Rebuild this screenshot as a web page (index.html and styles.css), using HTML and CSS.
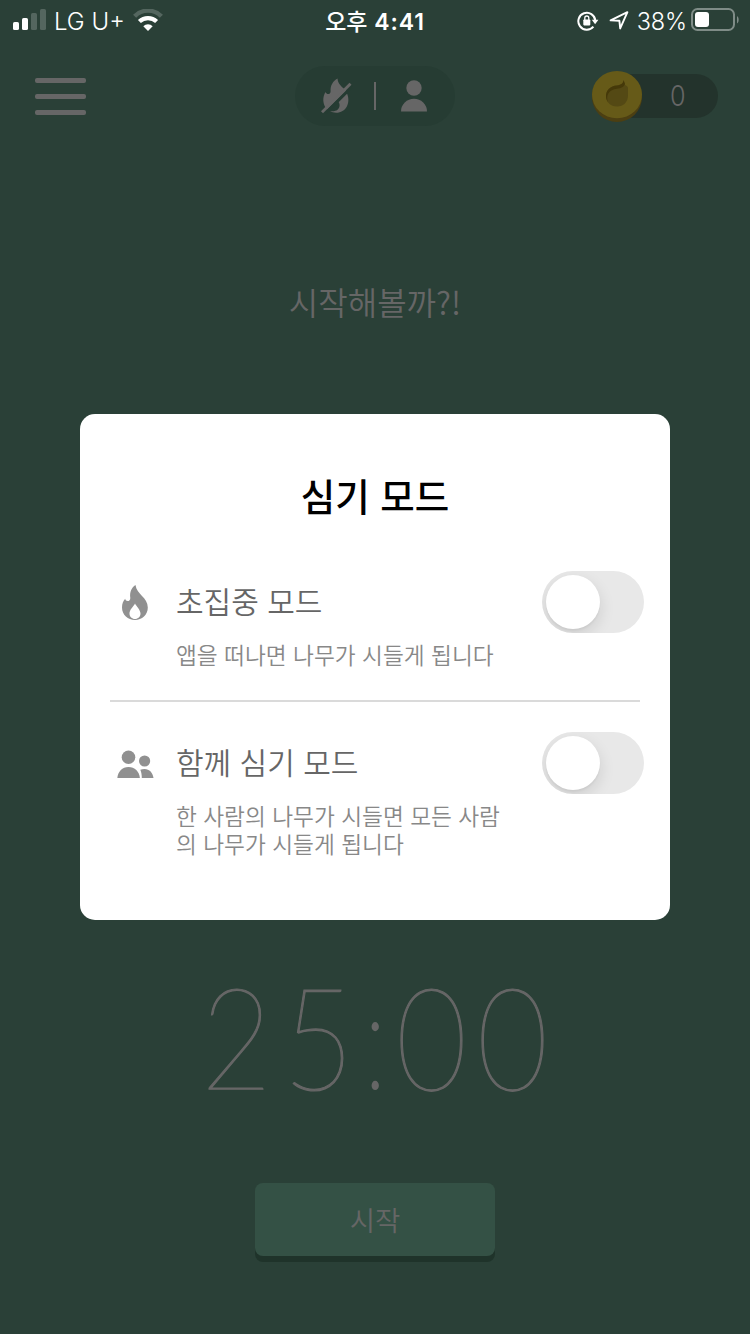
FILE: index.html
```html
<!DOCTYPE html>
<html lang="ko">
<head>
    <meta charset="UTF-8"/>
    <title>심기 모드</title>
    <meta name="viewport" content="width=device-width, initial-scale=1"/>
    <link rel="stylesheet" href="styles.css">
</head>
<body>
    <div class="screen">
        <header class="status">
            <div class="status-left">
                <svg class="signal" width="34" height="22" viewBox="0 0 34 22" fill="#fff">
                    <rect x="0" y="13" width="6" height="8" rx="1.6"/>
                    <rect x="9" y="9" width="6" height="12" rx="1.6"/>
                    <rect x="18" y="4" width="6" height="17" rx="1.6" opacity=".2"/>
                    <rect x="27" y="0" width="6" height="21" rx="1.6" opacity=".2"/>
                </svg>
                <span class="carrier">LG U+</span>
                <svg class="wifi" width="30" height="22" viewBox="0 0 30 22" fill="none" stroke="#fff">
                    <path d="M1.600 7.200a19 19 0 0 1 26.800 0" stroke-width="4.400" opacity=".2"/>
                    <path d="M6.400 12.600a12.400 12.400 0 0 1 17.200 0" stroke-width="4.200"/>
                    <path d="M15 22l-4.700-4.800a6.700 6.700 0 0 1 9.400 0z" fill="#fff" stroke="none"/>
                </svg>
            </div>
            <div class="clock"><span>오후</span> 4:41</div>
            <div class="status-right">
                <svg class="lock" width="22" height="20" viewBox="0 0 22 20">
                    <path d="M16.400 15.600A8.500 8.500 0 1 1 18.300 9.500" fill="none" stroke="#fff" stroke-width="2"/>
                    <path d="M14.800 8.800h6.600l-3.300 4.400z" fill="#fff"/>
                    <rect x="6.300" y="8.400" width="7" height="6" rx=".8" fill="#fff"/>
                    <path d="M7.800 9V7a2 2 0 0 1 4 0v2" fill="none" stroke="#fff" stroke-width="1.300"/>
                </svg>
                <svg class="arrow" width="20" height="19" viewBox="0 0 20 19">
                    <path d="M1.600 9.400L18.400 1.200l-7.200 16.200-.8-7.600z" fill="none" stroke="#fff" stroke-width="1.900" stroke-linejoin="round"/>
                </svg>
                <span class="percent">38%</span>
                <svg class="battery" width="48" height="24" viewBox="0 0 48 24">
                    <rect x="1" y="1" width="42" height="21" rx="5.500" fill="none" stroke="#fff" stroke-width="2" opacity=".4"/>
                    <rect x="4" y="4" width="14" height="15" rx="3" fill="#fff"/>
                    <path d="M46 8c2.200 1.300 2.200 6.200 0 7.500z" fill="#fff" opacity=".4"/>
                </svg>
            </div>
        </header>
        <nav class="topbar">
            <div class="menu"><i></i><i></i><i></i></div>
            <div class="modes">
                <svg width="32" height="36" viewBox="0 0 32 36">
                    <path d="M16.500 .5C17 6 20.500 8.500 25 12.500L6 31.200C1.500 27 1.200 18.500 4.700 14c.8 3.300 5.300 2.500 4.900-1C9.200 7.500 12 3 16.500 .5z" fill="#666"/>
                    <path d="M26 15.500c4 9.500-1.100 19.300-10.800 19.300-2.500 0-4.500-.6-6.200-1.700 5.500 1 9.500-1.300 9.600-5.800 0-1.600-.6-3.100-1.600-3.800z" fill="#666"/>
                    <path d="M4.500 36.300l28.500-28.500" stroke="#263c33" stroke-width="1.500"/>
                    <path d="M1 34.300l28.500-28.500" stroke="#666" stroke-width="2.800"/>
                </svg>
                <span class="modes-line"></span>
                <svg width="26" height="32" viewBox="0 0 26 32" fill="#666">
                    <circle cx="13" cy="8" r="7.700"/>
                    <path d="M0 31.500a13 12.700 0 0 1 26 0z"/>
                </svg>
            </div>
            <div class="coins">
                <svg width="50" height="51" viewBox="0 0 50 51">
                    <circle cx="25" cy="26" r="25" fill="#4c3f12"/>
                    <ellipse cx="25" cy="23.600" rx="25" ry="23.600" fill="#665a18"/>
                    <path d="M31.500 9c0 3-2 5-6.500 5.500-6.500.2-11 4.700-11 10.500s4.500 10.500 11 10.500 11-4.500 11-11V17c0-1.500-1.500-2.500-3-3z" fill="#544914"/>
                    <path d="M31.500 9c0 3-2 5-6.500 5.500-6.500.2-11 4.700-11 10.500 0 2.500.8 4.800 2.200 6.500-3-7 1-13.300 8.800-13.800 4.300-.3 7-1.700 8-4.700z" fill="#453909"/>
                </svg>
                <span class="coins-count">0</span>
            </div>
        </nav>
        <main class="timer">
            <p class="greeting">시작해볼까?!</p>
            <div class="time"><span>2</span><span>5</span><span class="colon">:</span><span>0</span><span>0</span></div>
            <button class="start">시작</button>
        </main>
    </div>
    <section class="dialog">
        <h1>심기 모드</h1>
        <div class="option">
            <svg class="option-icon" width="38" height="36" viewBox="0 0 38 36">
                <path d="M19.500 0C20.500 9 31.800 12.500 31.800 22.500 31.800 30 26 35 19 35S6 30 6 22.500c0-3.600 1.200-6.700 3.200-8.700.2 3.100 5.400 3.200 5.100-.8C13.500 7 15.500 2.500 19.500 0zM19 18.500c-1.500 3-5.500 6-5.500 10 0 3.200 2.500 5.500 5.500 5.500s5.500-2.300 5.500-5.500c0-3.500-4-7-5.500-10z" fill="#909090" fill-rule="evenodd"/>
            </svg>
            <div class="option-text">
                <h2>초집중 모드</h2>
                <p>앱을 떠나면 나무가 시들게 됩니다</p>
            </div>
            <span class="switch"></span>
        </div>
        <div class="option">
            <svg class="option-icon" width="38" height="36" viewBox="0 0 38 36" fill="#909090">
                <circle cx="12.500" cy="11.200" r="6.800"/>
                <circle cx="28.600" cy="15" r="5.600"/>
                <path d="M1.300 32c.6-6.500 5-11 11.200-11s10.800 4.500 11.400 11z"/>
                <path d="M24.300 23.800c1.300-.6 2.700-.9 4.200-.9 5 0 8.400 3.800 9 9.100H25.800c0-3.200-.5-6-1.500-8.200z"/>
            </svg>
            <div class="option-text">
                <h2>함께 심기 모드</h2>
                <p>한 사람의 나무가 시들면 모든 사람<br>의 나무가 시들게 됩니다</p>
            </div>
            <span class="switch"></span>
        </div>
    </section>
</body>
</html>
```
FILE: styles.css
```css
body {
    margin: 0;
    background-color: #2a4037;
    color: #666;
    font-family: Inter, 'Noto Sans CJK KR', sans-serif;
}

h1, h2, p {
    margin: 0;
}

svg {
    display: block;
    flex: none;
}

.screen {
    display: flex;
    flex-direction: column;
    width: 750px;
    height: 1334px;
    overflow: hidden;
}

/* status bar */
.status {
    display: grid;
    grid-template-columns: 1fr auto 1fr;
    align-items: center;
    height: 40px;
    color: #fff;
    font-size: 24px;
    white-space: nowrap;
}

.status-left, .status-right {
    display: flex;
    align-items: center;
}

.status-left {
    padding-left: 13px;
}

.status-right {
    justify-content: flex-end;
    padding-right: 11px;
}

.carrier {
    margin: 2px 8px 0 7px;
    font-weight: 350;
}

.clock {
    font-size: 23px;
    font-weight: 600;
    letter-spacing: .9px;
}

.clock span {
    font-weight: 500;
    letter-spacing: 0;
}

.lock {
    margin-top: 1px;
}

.arrow {
    margin: 0 8px 0 10px;
}

.percent {
    margin: 2px 4px 0 0;
    font-size: 23.500px;
    font-weight: 350;
    letter-spacing: -.1px;
}

/* menu, current modes, coins */
.topbar {
    display: grid;
    grid-template-columns: 1fr 160px 1fr;
    align-items: center;
    height: 60px;
    margin-top: 26px;
    padding: 0 32px;
}

.menu {
    display: grid;
    gap: 11px;
    width: 51px;
    margin-left: 3px;
}

.menu i {
    height: 5px;
    border-radius: 2px;
    background-color: #666;
}

.modes {
    display: flex;
    align-items: center;
    box-sizing: border-box;
    height: 60px;
    padding-left: 26px;
    border-radius: 30px;
    background-color: #263c33;
}

.modes-line {
    width: 2px;
    height: 28px;
    margin: 0 25px 0 21px;
    background-color: #666;
}

.coins {
    display: flex;
    align-items: center;
    justify-self: end;
    width: 126px;
    height: 44px;
    border-radius: 22px;
    background-color: #23332c;
}

.coins-count {
    flex: 1;
    padding-right: 5px;
    font-size: 28px;
    font-weight: 300;
    text-align: center;
    transform: scaleX(.9);
}

/* timer */
.timer {
    display: flex;
    flex-direction: column;
    align-items: center;
}

.greeting {
    margin-top: 151px;
    font-size: 32px;
    font-weight: 350;
    line-height: 48px;
    font-family: 'Noto Sans CJK KR', sans-serif;
}

.time {
    display: flex;
    margin-top: 625px;
    font-family: Lato, sans-serif;
    font-size: 140px;
    font-weight: 100;
    line-height: 170px;
    -webkit-text-stroke: 1.200px #666;
}

/* narrow digits */
.time span {
    transform: scale(.88, 1.01);
}

.time .colon {
    transform: scaleX(.8);
    -webkit-text-stroke: 0;
}

.start {
    width: 240px;
    height: 73px;
    margin-top: 63px;
    padding: 0 0 2px;
    border: 0;
    border-radius: 8px;
    background-color: #345145;
    box-shadow: 0 6px #1f332a;
    color: #666;
    font: 350 27.500px 'Noto Sans CJK KR', sans-serif;
}

/* dialog */
.dialog {
    position: fixed;
    top: 414px;
    left: 80px;
    box-sizing: border-box;
    width: 590px;
    height: 506px;
    padding: 56px 30px 0;
    border-radius: 15px;
    background-color: #fff;
    font-family: 'Noto Sans CJK KR', sans-serif;
}

.dialog h1 {
    color: #000;
    font-size: 37.500px;
    font-weight: 500;
    line-height: 50px;
    text-align: center;
}

.option {
    display: flex;
    align-items: flex-start;
    box-sizing: border-box;
    height: 161px;
    margin-top: 21px;
    padding: 30px 0 0 6px;
    border-bottom: 2px solid #dadada;
}

.option + .option {
    margin-top: 0;
    border: 0;
}

.option-icon {
    margin-top: 14px;
}

.option-text {
    flex: 1;
    margin-left: 22px;
    white-space: nowrap;
}

.option h2 {
    color: #666;
    font-size: 30px;
    font-weight: 350;
    line-height: 58px;
}

.option p {
    margin-top: 12px;
    color: #888;
    font-size: 22.700px;
    font-weight: 350;
    line-height: 28px;
}

.switch {
    display: flex;
    align-items: center;
    box-sizing: border-box;
    width: 102px;
    height: 62px;
    margin-right: -4px;
    padding-left: 4px;
    border-radius: 31px;
    background-color: #e8e8e8;
    overflow: hidden;
}

.switch::before {
    content: '';
    width: 54px;
    height: 54px;
    border-radius: 50%;
    background-color: #fff;
    box-shadow: 0 6px 16px rgba(0, 0, 0, .12), 0 2px 2px rgba(0, 0, 0, .04);
}
```
